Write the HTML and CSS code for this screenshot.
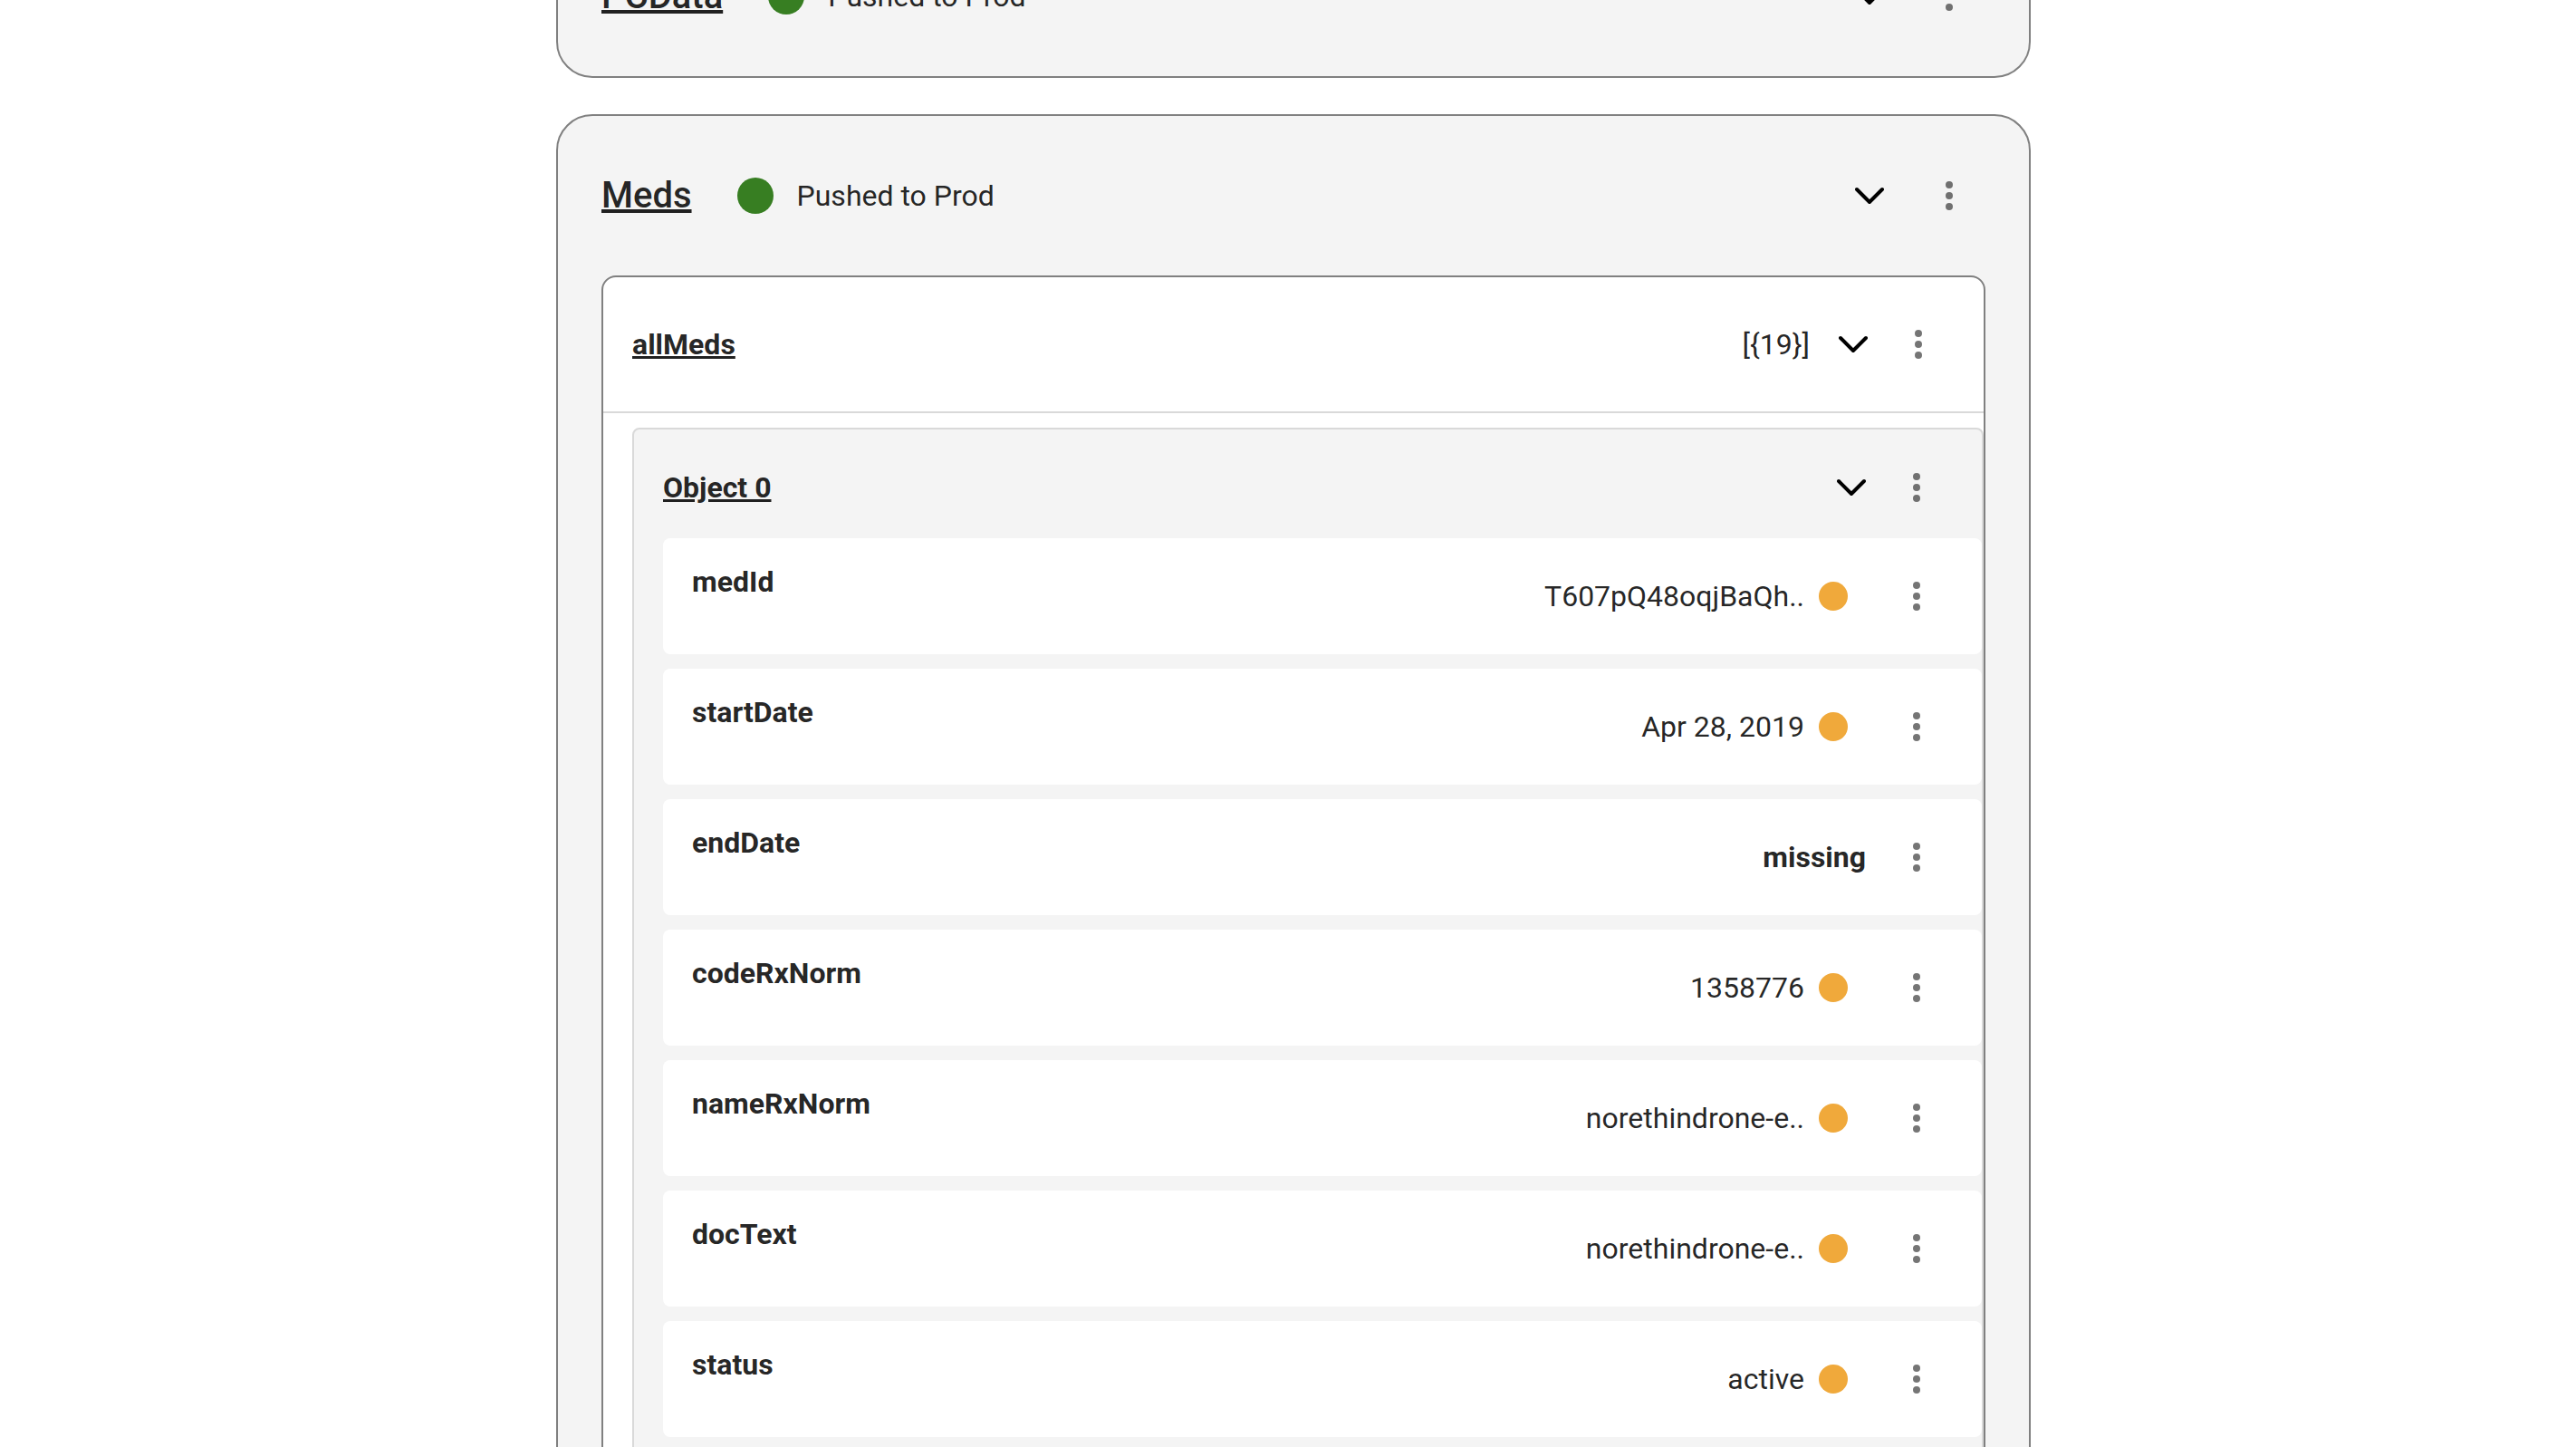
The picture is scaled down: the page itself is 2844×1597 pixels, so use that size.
FILE: index.html
```html
<!DOCTYPE html>
<html lang="en">
<head>
<meta charset="utf-8">
<title>Resources</title>
<link rel="stylesheet" href="styles.css">
</head>
<body>
<svg width="0" height="0" class="sprite" aria-hidden="true">
  <symbol id="chevron" viewBox="0 0 32 32"><path d="M2 9 16 23 30 9" fill="none" stroke="currentColor" stroke-width="4" stroke-linecap="round" stroke-linejoin="round"/></symbol>
  <symbol id="more" viewBox="0 0 24 24"><circle cx="12" cy="6" r="2"/><circle cx="12" cy="12" r="2"/><circle cx="12" cy="18" r="2"/></symbol>
</svg>
<div class="viewport">
<main class="page">
  <section class="card">
    <header class="card-header">
      <a class="card-title" href="#pcdata">PCData</a>
      <span class="status-dot"></span>
      <span class="status-text">Pushed to Prod</span>
      <button class="toggle" aria-label="Expand"><svg><use href="#chevron"/></svg></button>
      <button class="more" aria-label="More"><svg><use href="#more"/></svg></button>
    </header>
  </section>

  <section class="card">
    <header class="card-header">
      <a class="card-title" href="#meds">Meds</a>
      <span class="status-dot"></span>
      <span class="status-text">Pushed to Prod</span>
      <button class="toggle" aria-label="Collapse"><svg><use href="#chevron"/></svg></button>
      <button class="more" aria-label="More"><svg><use href="#more"/></svg></button>
    </header>
    <div class="panel">
      <header class="panel-header">
        <a class="name" href="#allmeds">allMeds</a>
        <span class="count">[{19}]</span>
        <button class="toggle" aria-label="Collapse"><svg><use href="#chevron"/></svg></button>
        <button class="more" aria-label="More"><svg><use href="#more"/></svg></button>
      </header>
      <div class="object">
        <header class="object-header">
          <a class="name" href="#object0">Object 0</a>
          <button class="toggle" aria-label="Collapse"><svg><use href="#chevron"/></svg></button>
          <button class="more" aria-label="More"><svg><use href="#more"/></svg></button>
        </header>
        <ul class="fields">
          <li class="field"><span class="label">medId</span><span class="value">T607pQ48oqjBaQh..</span><span class="dot"></span><button class="more" aria-label="More"><svg><use href="#more"/></svg></button></li>
          <li class="field"><span class="label">startDate</span><span class="value">Apr 28, 2019</span><span class="dot"></span><button class="more" aria-label="More"><svg><use href="#more"/></svg></button></li>
          <li class="field"><span class="label">endDate</span><span class="value missing">missing</span><button class="more" aria-label="More"><svg><use href="#more"/></svg></button></li>
          <li class="field"><span class="label">codeRxNorm</span><span class="value">1358776</span><span class="dot"></span><button class="more" aria-label="More"><svg><use href="#more"/></svg></button></li>
          <li class="field"><span class="label">nameRxNorm</span><span class="value">norethindrone-e..</span><span class="dot"></span><button class="more" aria-label="More"><svg><use href="#more"/></svg></button></li>
          <li class="field"><span class="label">docText</span><span class="value">norethindrone-e..</span><span class="dot"></span><button class="more" aria-label="More"><svg><use href="#more"/></svg></button></li>
          <li class="field"><span class="label">status</span><span class="value">active</span><span class="dot"></span><button class="more" aria-label="More"><svg><use href="#more"/></svg></button></li>
        </ul>
      </div>
    </div>
  </section>
</main>
</div>
</body>
</html>
```
FILE: styles.css
```css
* {
  box-sizing: border-box;
}

body {
  margin: 0;
  background: #fff;
  color: rgba(0, 0, 0, 0.87);
  font: 400 32px/48px Roboto, sans-serif;
}

.sprite {
  display: none;
}

.viewport {
  height: 100vh;
  overflow: hidden;
}

/* The list is scrolled: the first card is partly above the top edge. */
.page {
  display: flex;
  flex-direction: column;
  gap: 40px;
  max-width: 1640px;
  margin: -94px auto 0;
  padding-left: 12px;
}

.card {
  padding: 0 48px;
  border: 2px solid #808080;
  border-radius: 40px;
  background: #f4f4f4;
}

.card:last-child {
  padding-bottom: 48px;
}

.card-header {
  display: flex;
  align-items: center;
  height: 176px;
  padding-right: 16px;
}

.card-title {
  margin-right: 50px;
  color: inherit;
  font-size: 40px;
  font-weight: 500;
}

.status-dot {
  width: 40px;
  height: 40px;
  margin-right: 26px;
  border-radius: 50%;
  background: #377e22;
}

button {
  flex: none;
  padding: 0;
  border: 0;
  background: none;
  cursor: pointer;
}

button svg {
  display: block;
  width: 100%;
  height: 100%;
}

.toggle {
  width: 32px;
  height: 32px;
  margin-left: auto;
  color: #000;
}

.more {
  width: 48px;
  height: 48px;
  margin-left: 32px;
  fill: rgba(0, 0, 0, 0.54);
}

.card-header .more {
  margin-left: 48px;
}

.panel {
  padding-bottom: 16px;
  border: 2px solid #808080;
  border-radius: 16px;
  background: #fff;
}

.panel-header {
  display: flex;
  align-items: center;
  height: 150px;
  padding: 0 48px 0 32px;
  border-bottom: 2px solid #d9d9d9;
}

.name {
  color: inherit;
  font-weight: 700;
}

.count {
  margin-left: auto;
}

.panel-header .toggle {
  margin-left: 32px;
}

.object {
  margin: 16px 0 0 32px;
  border: 2px solid #d9d9d9;
  border-radius: 8px;
  background: #f4f4f4;
}

.object-header {
  display: flex;
  align-items: center;
  height: 120px;
  padding: 8px 48px 0 32px;
}

.fields {
  display: flex;
  flex-direction: column;
  gap: 16px;
  margin: 0;
  padding: 0 0 16px 32px;
  list-style: none;
}

.field {
  display: flex;
  align-items: center;
  height: 128px;
  padding: 0 48px 0 32px;
  border-radius: 8px;
  background: #fff;
}

.label {
  align-self: flex-start;
  padding-top: 24px;
  font-weight: 700;
}

.value {
  margin-left: auto;
}

.missing {
  font-weight: 700;
}

.dot {
  width: 32px;
  height: 32px;
  margin: 0 20px 0 16px;
  border-radius: 50%;
  background: #f0a93b;
}
```
